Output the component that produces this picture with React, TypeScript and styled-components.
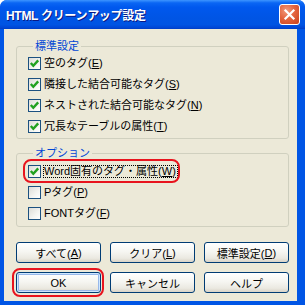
import React from "react";
import styled, { createGlobalStyle } from "styled-components";

const GlobalStyle = createGlobalStyle`
  html, body {
    margin: 0;
    padding: 0;
    background: #ffffff;
  }
  body {
    font-family: "Liberation Sans", "Noto Sans CJK JP", sans-serif;
    font-size: 11px;
  }
`;

type Item = { label: string; key: string; checked: boolean; focused?: boolean; marked?: boolean };

const standardItems: Item[] = [
  { label: "空のタグ", key: "E", checked: true },
  { label: "隣接した結合可能なタグ", key: "S", checked: true },
  { label: "ネストされた結合可能なタグ", key: "N", checked: true },
  { label: "冗長なテーブルの属性", key: "T", checked: true },
];

const optionItems: Item[] = [
  { label: "Word固有のタグ・属性", key: "W", checked: true, focused: true, marked: true },
  { label: "Pタグ", key: "P", checked: false },
  { label: "FONTタグ", key: "F", checked: false },
];

const Check = ({ checked }: { checked: boolean }) => (
  <CheckBox>
    {checked && (
      <svg width="11" height="11" viewBox="0 0 11 11">
        <path d="M1.8 5 L4.3 7.8 L9.2 2.4" fill="none" stroke="#21A121" strokeWidth="2.4" />
      </svg>
    )}
  </CheckBox>
);

const Mnemonic = ({ text, k }: { text: string; k: string }) => (
  <>
    {text}(<u>{k}</u>)
  </>
);

const App = () => {
  const renderGroup = (title: string, items: Item[], top: number) => (
    <Group $padTop={top}>
      <Legend>{title}</Legend>
      {items.map((it) => (
        <Row key={it.key}>
          {it.marked && <Marker />}
          <Check checked={it.checked} />
          <RowLabel $focused={!!it.focused}>
            <Mnemonic text={it.label} k={it.key} />
          </RowLabel>
        </Row>
      ))}
    </Group>
  );

  return (
    <>
      <GlobalStyle />
      <Window>
        <TitleBar>
          <Title>HTML クリーンアップ設定</Title>
          <CloseButton>
            <svg width="13" height="13" viewBox="0 0 13 13">
              <path d="M2.5 2.5 L10.5 10.5 M10.5 2.5 L2.5 10.5" stroke="#fff" strokeWidth="2.2" strokeLinecap="square" />
            </svg>
          </CloseButton>
        </TitleBar>
        <Body>
          {renderGroup("標準設定", standardItems, 0)}
          {renderGroup("オプション", optionItems, 1)}
          <ButtonGrid>
            <Button><Mnemonic text="すべて" k="A" /></Button>
            <Button><Mnemonic text="クリア" k="L" /></Button>
            <Button><Mnemonic text="標準設定" k="D" /></Button>
            <Button $default>
              <Marker $button />
              OK
            </Button>
            <Button>キャンセル</Button>
            <Button>ヘルプ</Button>
          </ButtonGrid>
        </Body>
      </Window>
    </>
  );
};

export default App;

const Window = styled.div`
  width: 305px;
  height: 305px;
  display: flex;
  flex-direction: column;
  box-sizing: border-box;
  border-radius: 7px 7px 0 0;
  overflow: hidden;
  background: #0055e5;
`;

const TitleBar = styled.div`
  height: 29px;
  flex: none;
  display: flex;
  align-items: center;
  justify-content: space-between;
  padding: 0 5px 0 6px;
  background: linear-gradient(
    180deg,
    #3d95ff 0%,
    #0a66f4 10%,
    #0058ee 25%,
    #0055e5 60%,
    #0054e3 85%,
    #0047d6 95%,
    #003dc4 100%
  );
`;

const Title = styled.div`
  color: #ffffff;
  font-weight: bold;
  font-size: 12px;
  text-shadow: 1px 1px 0 #0a1883;
  letter-spacing: -0.3px;
`;

const CloseButton = styled.div`
  width: 21px;
  height: 21px;
  box-sizing: border-box;
  border: 1px solid #ffffff;
  border-radius: 3px;
  background: radial-gradient(circle at 35% 30%, #f29a7c 0%, #e4653f 45%, #c9401b 100%);
  display: flex;
  align-items: center;
  justify-content: center;
`;

const Body = styled.div`
  flex: 1;
  margin: 0 8px 4px 4px;
  background: #ece9d8;
  padding: 10px 8px 8px 12px;
  display: flex;
  flex-direction: column;
`;

const Group = styled.fieldset<{ $padTop: number }>`
  margin: 0 0 7px 0;
  padding: ${({ $padTop }) => $padTop}px 0 ${({ $padTop }) => 1 + $padTop}px 11px;
  border: 1px solid #d0d0bf;
  border-radius: 3px;
  min-width: 0;
  &:last-of-type {
    margin-bottom: 0;
  }
`;

const Legend = styled.legend`
  color: #0046d5;
  padding: 0 2px;
  margin-left: 5px;
  line-height: 14px;
  font-size: 11px;
`;

const Row = styled.div`
  position: relative;
  height: 21px;
  display: flex;
  align-items: center;
  color: #000000;
`;

const CheckBox = styled.div`
  width: 13px;
  height: 13px;
  box-sizing: border-box;
  border: 1px solid #1c5180;
  background: linear-gradient(135deg, #dcdcd7 0%, #f4f4f1 60%, #ffffff 100%);
  display: flex;
  align-items: center;
  justify-content: center;
  flex: none;
`;

const RowLabel = styled.span<{ $focused: boolean }>`
  margin-left: 2px;
  border: 1px dotted ${({ $focused }) => ($focused ? "#000000" : "transparent")};
  padding: 0 1px 0 0;
  line-height: 11px;
  white-space: nowrap;
`;

const Marker = styled.div<{ $button?: boolean }>`
  position: absolute;
  border: 2px solid #e8141e;
  border-radius: 8px;
  pointer-events: none;
  ${({ $button }) =>
    $button
      ? "left: -5px; top: -5px; right: -4px; bottom: -5px;"
      : "left: -5px; top: -2px; width: 153px; height: 20px;"}
`;

const ButtonGrid = styled.div`
  margin-top: 15px;
  display: grid;
  grid-template-columns: repeat(3, 85px);
  grid-auto-rows: 21px;
  column-gap: 9px;
  row-gap: 9px;
`;

const Button = styled.div<{ $default?: boolean }>`
  position: relative;
  box-sizing: border-box;
  border: 1px solid #003c74;
  border-radius: 3px;
  background: linear-gradient(180deg, #ffffff 0%, #f6f6f2 45%, #ebe9e1 80%, #d8d3c7 100%);
  display: flex;
  align-items: center;
  justify-content: center;
  color: #000000;
  font-size: 11px;
  box-shadow: ${({ $default }) =>
    $default ? "inset 0 0 0 1px #cee7ff, inset 0 0 0 2px #98b8ea" : "none"};
`;
